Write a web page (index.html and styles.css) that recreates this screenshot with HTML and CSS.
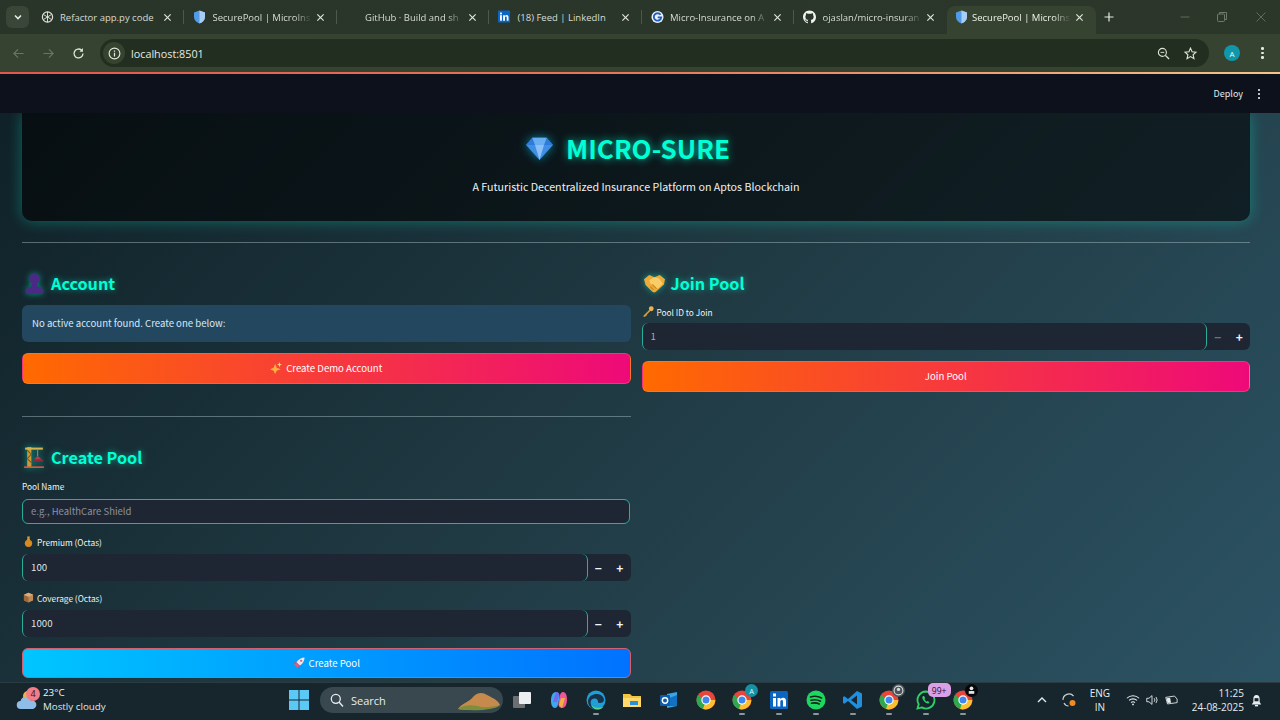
FILE: index.html
```html
<!DOCTYPE html>
<html lang="en">
<head>
    <meta charset="UTF-8">
    <meta name="viewport" content="width=device-width, initial-scale=1.0">
    <title>SecurePool | MicroInsure</title>
    <link rel="stylesheet" href="styles.css">
</head>
<body>
    <svg class="defs" width="0" height="0">
        <symbol id="i-shield" viewBox="0 0 12 14">
            <path d="M6 .5 11.500 2.400V7c0 3.200-2.400 5.400-5.500 6.600C2.900 12.400.5 10.200.5 7V2.400Z" fill="#4f9be8"/>
            <path d="M6 .5 11.500 2.400V7c0 3.200-2.400 5.400-5.500 6.600Z" fill="#a9cdf2"/>
        </symbol>
        <symbol id="i-close" viewBox="0 0 10 10">
            <path d="M1.500 1.500 8.500 8.500M8.500 1.500 1.500 8.500" stroke="#dfe5da" stroke-width="1.300" fill="none"/>
        </symbol>
        <symbol id="i-chrome" viewBox="0 0 20 20">
            <circle cx="10" cy="10" r="9.500" fill="#e8453c"/>
            <path d="M10 10 1.800 5.200A9.500 9.500 0 0 0 6.500 18.800L10 19.500Z" fill="#2fa84f"/>
            <path d="M10 10h9.300A9.500 9.500 0 0 1 7 19Z" fill="#fbc02d"/>
            <circle cx="10" cy="10" r="4.700" fill="#fff"/>
            <circle cx="10" cy="10" r="3.500" fill="#3f86ee"/>
        </symbol>
        <symbol id="i-github" viewBox="0 0 16 16">
            <path fill="#f2f4ef" d="M8 0C3.580 0 0 3.580 0 8c0 3.540 2.290 6.530 5.470 7.590.4.070.55-.17.55-.38 0-.19-.01-.82-.01-1.490-2.010.37-2.530-.49-2.690-.94-.09-.23-.48-.94-.82-1.130-.28-.15-.68-.52-.01-.53.63-.01 1.080.58 1.230.82.720 1.210 1.870.870 2.330.660.070-.520.280-.870.510-1.070-1.780-.2-3.640-.89-3.640-3.950 0-.870.310-1.590.820-2.150-.080-.2-.360-1.020.080-2.120 0 0 .670-.210 2.200.820a7.400 7.400 0 0 1 4 0c1.530-1.040 2.200-.820 2.200-.820.440 1.100.160 1.920.080 2.120.510.560.820 1.270.820 2.150 0 3.070-1.870 3.750-3.650 3.950.290.250.540.730.540 1.480 0 1.070-.010 1.930-.010 2.200 0 .210.150.460.550.380A8 8 0 0 0 16 8c0-4.420-3.580-8-8-8Z"/>
        </symbol>
    </svg>

    <div class="tabstrip">
        <div class="tab-menu">
            <svg width="10" height="10" viewBox="0 0 10 10"><path d="M2 3.500 5 6.500 8 3.500" stroke="#e6ebe2" stroke-width="1.600" fill="none"/></svg>
        </div>
        <div class="tab">
            <svg class="favicon" viewBox="0 0 14 14"><circle cx="7" cy="7" r="5.500" fill="none" stroke="#dfe5da" stroke-width="1.300"/><path d="M3 4.500 11 9.500M3 9.500 11 4.500M7 1.500V12.500" stroke="#dfe5da" stroke-width="1"/></svg>
            <span class="tab-title tab-title-full">Refactor app.py code</span>
            <svg class="tab-close"><use href="#i-close"/></svg>
        </div>
        <div class="tab">
            <svg class="favicon"><use href="#i-shield"/></svg>
            <span class="tab-title">SecurePool | MicroIns</span>
            <svg class="tab-close"><use href="#i-close"/></svg>
        </div>
        <div class="tab">
            <svg class="favicon" viewBox="0 0 14 14"></svg>
            <span class="tab-title">GitHub · Build and sh</span>
            <svg class="tab-close"><use href="#i-close"/></svg>
        </div>
        <div class="tab">
            <svg class="favicon" viewBox="0 0 14 14"><rect width="13" height="13" rx="1" fill="#0a66c2"/><rect x="2.200" y="5" width="2" height="6" fill="#fff"/><rect x="2.200" y="2.200" width="2" height="2" fill="#fff"/><path d="M5.500 5h1.900v1c.5-.8 1.200-1.200 2-1.200 1.400 0 1.900 1 1.900 2.400V11H9.400V7.800c0-.8-.2-1.300-.9-1.300s-1 .6-1 1.300V11h-2Z" fill="#fff"/></svg>
            <span class="tab-title tab-title-full">(18) Feed | LinkedIn</span>
            <svg class="tab-close"><use href="#i-close"/></svg>
        </div>
        <div class="tab">
            <svg class="favicon" viewBox="0 0 14 14"><circle cx="7" cy="7" r="6.500" fill="#eef2fb"/><path d="M10.300 4.600A4 4 0 1 0 11 7.400H7.200" fill="none" stroke="#1f5fbf" stroke-width="2"/></svg>
            <span class="tab-title">Micro-Insurance on A</span>
            <svg class="tab-close"><use href="#i-close"/></svg>
        </div>
        <div class="tab">
            <svg class="favicon"><use href="#i-github"/></svg>
            <span class="tab-title">ojaslan/micro-insuran</span>
            <svg class="tab-close"><use href="#i-close"/></svg>
        </div>
        <div class="tab tab-active">
            <svg class="favicon"><use href="#i-shield"/></svg>
            <span class="tab-title">SecurePool | MicroIns</span>
            <svg class="tab-close"><use href="#i-close"/></svg>
        </div>
        <svg class="tab-new" viewBox="0 0 10 10"><path d="M5 .5V9.500M.5 5H9.500" stroke="#e6ebe2" stroke-width="1.200"/></svg>
        <div class="win-controls">
            <svg viewBox="0 0 10 10"><path d="M.5 5H9.500" stroke="#5f6b5a" stroke-width="1"/></svg>
            <svg viewBox="0 0 10 10"><rect x=".5" y="2" width="7" height="7.500" rx="1" fill="none" stroke="#6f7b6a"/><path d="M2.500 2V.5H9.500V7.500H8" fill="none" stroke="#6f7b6a"/></svg>
            <svg class="win-close" viewBox="0 0 10 10"><path d="M.5 .5 9.500 9.500M9.500 .5 .5 9.500" stroke="#5f6b5a" stroke-width="1"/></svg>
        </div>
    </div>

    <div class="toolbar">
        <svg class="nav-icon" viewBox="0 0 14 14"><path d="M12.500 7H2M6.500 2.500 2 7l4.500 4.500" fill="none" stroke="#69755f" stroke-width="1.300"/></svg>
        <svg class="nav-icon" viewBox="0 0 14 14"><path d="M1.500 7H12M7.500 2.500 12 7l-4.500 4.500" fill="none" stroke="#69755f" stroke-width="1.300"/></svg>
        <svg class="nav-icon" viewBox="0 0 14 14"><path d="M11.800 7A4.800 4.800 0 1 1 10.300 3.500" fill="none" stroke="#dfe5da" stroke-width="1.400"/><path d="M11.800 1.200V5H8Z" fill="#dfe5da"/></svg>
        <div class="omnibox">
            <span class="site-info">
                <svg width="13" height="13" viewBox="0 0 14 14"><circle cx="7" cy="7" r="5.800" fill="none" stroke="#e6ebe2" stroke-width="1.200"/><path d="M7 6.200V10.200M7 3.800V5" stroke="#e6ebe2" stroke-width="1.300"/></svg>
            </span>
            <span class="url">localhost:8501</span>
            <svg class="omni-icon" viewBox="0 0 14 14"><circle cx="5.800" cy="5.800" r="4.300" fill="none" stroke="#dfe5da" stroke-width="1.200"/><path d="M9 9 13 13" stroke="#dfe5da" stroke-width="1.400"/><path d="M3.800 5.800H7.800" stroke="#dfe5da"/></svg>
            <svg class="omni-icon" viewBox="0 0 14 14"><path d="M7 1.200 8.700 5.100 13 5.500 9.800 8.300 10.700 12.500 7 10.300 3.300 12.500 4.200 8.300 1 5.500 5.300 5.100Z" fill="none" stroke="#dfe5da" stroke-width="1.200"/></svg>
        </div>
        <span class="avatar">A</span>
        <span class="chrome-dots"><i></i><i></i><i></i></span>
    </div>
    <div class="loadline"></div>

    <div class="app">
        <div class="app-header">
            <span class="deploy">Deploy</span>
            <span class="app-dots"><i></i><i></i><i></i></span>
        </div>

        <div class="app-main">
            <div class="hero">
                <h1 class="hero-title">
                    <svg class="hero-gem" viewBox="0 0 32 28">
                        <path d="M8 2H24L31 10 16 27 1 10Z" fill="#3f8fe8"/>
                        <path d="M11 10H21L16 27Z" fill="#8cc1f7"/>
                        <path d="M8 2 11 10H1ZM24 2 21 10H31Z" fill="#2f7bd6"/>
                        <path d="M8 2H24L21 10H11Z" fill="#6aaef2"/>
                    </svg>
                    MICRO-SURE
                </h1>
                <p class="hero-sub">A Futuristic Decentralized Insurance Platform on Aptos Blockchain</p>
            </div>

            <hr class="rule rule-top">

            <div class="columns">
                <div class="col">
                    <h2 class="section-title">
                        <svg class="section-icon" viewBox="0 0 20 22"><circle cx="10" cy="6.500" r="5" fill="#4b2a85"/><path d="M7.500 10.500h5l1 3.500c2.500.6 4.500 1.700 4.500 3.500V21H2v-3.500c0-1.800 2-2.900 4.500-3.500Z" fill="#4b2a85"/></svg>
                        Account
                    </h2>
                    <div class="info-box">No active account found. Create one below:</div>
                    <button class="btn btn-hot" type="button">
                        <svg class="btn-icon" viewBox="0 0 14 14"><path d="M6 2 7.800 6.700 12.500 8.500 7.800 10.300 6 14 4.200 10.300 0 8.500 4.200 6.700Z" fill="#fbb040"/><path d="M11 0 11.800 2.200 14 3 11.800 3.800 11 6 10.200 3.800 8 3 10.200 2.200Z" fill="#fdd27a"/></svg>
                        Create Demo Account
                    </button>

                    <hr class="rule rule-mid">

                    <h2 class="section-title">
                        <svg class="section-icon" viewBox="0 0 20 22"><rect x="3" y="1" width="4" height="19" fill="#c99a3c"/><path d="M3 4 7 8M7 8 3 12M3 12 7 16" stroke="#7a5a20" stroke-width="1"/><rect x="1" y="1.500" width="17" height="2" fill="#d8b34a"/><path d="M13 3.500V10" stroke="#8a8f92" stroke-width="1"/><path d="M9.500 13 13 9.500 17 13Z" fill="#c23a48"/><rect x="9" y="13" width="9" height="2" fill="#8c2b3e"/><rect x="0" y="19.500" width="19" height="1.500" fill="#e0583f"/></svg>
                        Create Pool
                    </h2>
                    <label class="field-label">Pool Name</label>
                    <div class="text-input">e.g., HealthCare Shield</div>
                    <label class="field-label field-label-next">
                        <svg class="label-icon" viewBox="0 0 12 12"><path d="M4.500 .5h3L7 3H5Z" fill="#e2a32e"/><rect x="4.500" y="3" width="3" height="1" fill="#f1e3b8"/><circle cx="6" cy="8" r="4" fill="#d98a1e"/></svg>
                        Premium (Octas)
                    </label>
                    <div class="number-input">
                        <span class="number-value">100</span>
                        <span class="step">&minus;</span>
                        <span class="step">+</span>
                    </div>
                    <label class="field-label field-label-next">
                        <svg class="label-icon" viewBox="0 0 12 12"><path d="M6 .8 11 3v6.200L6 11.500 1 9.200V3Z" fill="#c08a55"/><path d="M6 5.200V11.500L1 9.200V3Z" fill="#9c6a3a"/><path d="M1 3 6 5.200 11 3 6 .8Z" fill="#d9ad7c"/></svg>
                        Coverage (Octas)
                    </label>
                    <div class="number-input">
                        <span class="number-value">1000</span>
                        <span class="step">&minus;</span>
                        <span class="step">+</span>
                    </div>
                    <button class="btn btn-cool" type="button">
                        <svg class="btn-icon" viewBox="0 0 14 14"><path d="M13.500 .5C10 .5 6.500 2.500 4 6L8 10C11.500 7.500 13.500 4 13.500 .5Z" fill="#ece6ee"/><path d="M4 6 1 6.500 2.500 8.500ZM8 10 7.500 13 5.500 11.500Z" fill="#d6455d"/><path d="M4 6 8 10 5 12.500 1.500 9Z" fill="#e0607a"/><circle cx="9.500" cy="4.500" r="1.300" fill="#e0607a"/></svg>
                        Create Pool
                    </button>
                </div>

                <div class="col">
                    <h2 class="section-title">
                        <svg class="section-icon" viewBox="0 0 20 18"><path d="M0 5 5 1 10 3 15 1 20 5 19 10 11 17C10 17.800 8.500 17.500 7.500 16.500L1.500 10.500Z" fill="#eeaa38"/><path d="M5 6 10 3 14 4 18 9 13 14 8 9.500 6.500 10Z" fill="#f9cc66"/><path d="M6 12 9 15M8 10 12 14" stroke="#c4861f" stroke-width="1"/></svg>
                        Join Pool
                    </h2>
                    <label class="field-label">
                        <svg class="label-icon" viewBox="0 0 12 12"><circle cx="9" cy="3" r="2.600" fill="#ebb44c"/><path d="M7.500 3.500 .5 10.500V11.800H2.500L3 10.500 4.200 10.300 4.500 9 8.500 5Z" fill="#d9a03a"/></svg>
                        Pool ID to Join
                    </label>
                    <div class="number-input number-input-tight">
                        <span class="number-value number-dim">1</span>
                        <span class="step step-off">&minus;</span>
                        <span class="step">+</span>
                    </div>
                    <button class="btn btn-hot" type="button">Join Pool</button>
                </div>
            </div>
        </div>
    </div>

    <div class="taskbar">
        <div class="weather">
            <svg class="weather-icon" viewBox="0 0 22 24">
                <circle cx="12" cy="8" r="5" fill="#f2b23c"/>
                <path d="M5 21a4 4 0 0 1-.5-8 5.500 5.500 0 0 1 10.500-.5 4.300 4.300 0 0 1 2 8.500Z" fill="#8fbde8"/>
            </svg>
            <span class="weather-badge">4</span>
            <div class="weather-text">
                <span class="weather-temp">23°C</span>
                <span>Mostly cloudy</span>
            </div>
        </div>

        <div class="task-center">
            <svg class="win-logo" viewBox="0 0 20 20"><path d="M0 0H9.500V9.500H0ZM10.500 0H20V9.500H10.500ZM0 10.500H9.500V20H0ZM10.500 10.500H20V20H10.500Z" fill="#5cc8f5"/></svg>
            <div class="search-pill">
                <svg width="14" height="14" viewBox="0 0 14 14"><circle cx="5.800" cy="5.800" r="4.500" fill="none" stroke="#e6edf0" stroke-width="1.300"/><path d="M9 9 13 13.500" stroke="#e6edf0" stroke-width="1.400"/></svg>
                <span class="search-label">Search</span>
                <svg class="search-art" viewBox="0 0 44 20"><path d="M1 18C5 12 12 11 16 6 20 1 26 1 30 4 36 7 41 9 43 14 38 19 10 20 1 18Z" fill="#c58a4c"/><path d="M1 18C8 13 18 14 24 16 30 17 38 15 43 14 38 20 10 20 1 18Z" fill="#7c8f3a"/></svg>
            </div>
            <span class="app-slot">
                <svg viewBox="0 0 20 20"><rect x="1" y="6" width="12" height="12" rx="1" fill="#6b6f72"/><rect x="7" y="2" width="12" height="12" rx="1" fill="#eceff1"/></svg>
            </span>
            <span class="app-slot">
                <svg viewBox="0 0 20 20"><path d="M7 2C3.500 2 2 6 2 11c0 4 1.500 7 4 7 3 0 3-4 4-8s1-8-3-8Z" fill="#3fa7f0"/><path d="M13 18c3.500 0 5-4 5-9 0-4-1.500-7-4-7-3 0-3 4-4 8s-1 8 3 8Z" fill="#f0569a"/><path d="M7 2c2 0 3 1 3 3l-2 7H4Z" fill="#7e5cf0" opacity=".8"/><path d="M10 15l2-7h4l-3 10Z" fill="#f2b23c"/></svg>
            </span>
            <span class="app-slot app-open">
                <svg viewBox="0 0 20 20"><circle cx="10" cy="10" r="9.500" fill="#1f9fd8"/><path d="M2 12C2 6 7 4 11 4c4 0 7 3 7 6 0 2-2 3-4 3-1.500 0-2-.5-2-1.500 0-2-1.500-3.500-4-3-3 .5-4 3-3 6 1 3 4 5 8 4.500C8 20.500 3 18 2 12Z" fill="#17324a"/><path d="M5 15c1 3 4 5 8 4.500 2-.5 3.500-1.500 4.500-3-3 2-9 2-12.500-1.500Z" fill="#5fd48a"/></svg>
            </span>
            <span class="app-slot">
                <svg viewBox="0 0 20 20"><path d="M1 4H8L10 6H19V17H1Z" fill="#f5c542"/><rect x="1" y="8" width="18" height="9" fill="#ffd969"/><rect x="8" y="11" width="8" height="4" fill="#2f8fd6"/></svg>
            </span>
            <span class="app-slot">
                <svg viewBox="0 0 20 20"><path d="M8 4 18 2V16L8 18Z" fill="#38a6e8"/><path d="M8 9 18 5V16H8Z" fill="#1371c4"/><rect x="1" y="5" width="10" height="11" rx="1" fill="#0f5da8"/><circle cx="6" cy="10.500" r="2.700" fill="none" stroke="#fff" stroke-width="1.400"/></svg>
            </span>
            <span class="app-slot"><svg><use href="#i-chrome"/></svg></span>
            <span class="app-slot app-open">
                <svg><use href="#i-chrome"/></svg>
                <span class="slot-badge slot-badge-teal">A</span>
            </span>
            <span class="app-slot app-open">
                <svg viewBox="0 0 20 20"><rect x="1" y="1" width="18" height="18" rx="1.500" fill="#0a66c2"/><rect x="4" y="8" width="3" height="8.500" fill="#fff"/><rect x="4" y="3.500" width="3" height="3" fill="#fff"/><path d="M8.500 8h2.800v1.300c.7-1 1.800-1.500 2.900-1.500 2 0 2.800 1.400 2.800 3.400v5.300h-3v-4.800c0-1-.3-1.700-1.200-1.700-1 0-1.500.8-1.500 1.700v4.800H8.500Z" fill="#fff"/></svg>
            </span>
            <span class="app-slot app-open">
                <svg viewBox="0 0 20 20"><circle cx="10" cy="10" r="9.500" fill="#1ed760"/><path d="M4.500 7C8 6 12.500 6.300 15.500 8M5 10.200C8 9.400 11.800 9.700 14.500 11.200M5.500 13.200C8 12.600 11 12.800 13.300 14" fill="none" stroke="#10261a" stroke-width="1.600" stroke-linecap="round"/></svg>
            </span>
            <span class="app-slot app-open">
                <svg viewBox="0 0 20 20"><path d="M14 1 19 3.500V16.500L14 19 5 11 1.500 13.800 0 13V7L1.500 6.200 5 9Z" fill="#1f8fe0"/><path d="M14 5.500 8 10 14 14.500Z" fill="#17262d"/></svg>
            </span>
            <span class="app-slot app-open">
                <svg><use href="#i-chrome"/></svg>
                <span class="slot-badge slot-badge-grey">
                    <svg viewBox="0 0 10 10"><circle cx="5" cy="5" r="4" fill="none" stroke="#d5dadc"/><circle cx="5" cy="4" r="1.500" fill="#d5dadc"/></svg>
                </span>
            </span>
            <span class="app-slot app-open">
                <svg viewBox="0 0 20 20"><path d="M10 1.500a8.500 8.500 0 0 0-7.300 12.800L1.500 18.500l4.300-1.100A8.500 8.500 0 1 0 10 1.500Z" fill="#17262d" stroke="#2fd06a" stroke-width="1.800"/><path d="M7 6c-1 1-1 2.500.5 4.500s3.500 3.500 5 3l1-1.300-2-1.200-1 .7C9.500 10.500 9 10 8.500 9l.7-1L8 6Z" fill="#2fd06a"/></svg>
                <span class="slot-badge slot-badge-count">99+</span>
            </span>
            <span class="app-slot app-open">
                <svg><use href="#i-chrome"/></svg>
                <span class="slot-badge slot-badge-dark">
                    <svg viewBox="0 0 10 10"><circle cx="5" cy="3" r="1.700" fill="#e6e6e6"/><rect x="2.500" y="5.500" width="5" height="2.500" fill="#e6e6e6"/></svg>
                </span>
            </span>
        </div>

        <div class="tray">
            <svg class="tray-caret" viewBox="0 0 10 10"><path d="M1 7 5 3l4 4" fill="none" stroke="#e6edf0" stroke-width="1.300"/></svg>
            <svg class="tray-sync" viewBox="0 0 16 16"><path d="M2 8a6 6 0 0 1 10.500-4" fill="none" stroke="#c8d0d4" stroke-width="1.200"/><path d="M3 11c1 2 2.500 3 4.500 3" fill="none" stroke="#c8d0d4" stroke-width="1.200"/><circle cx="11.500" cy="11" r="3" fill="#f08a24"/></svg>
            <div class="tray-lang"><span>ENG</span><span>IN</span></div>
            <svg class="tray-icon" viewBox="0 0 16 16"><path d="M1 6a10 10 0 0 1 14 0M3.500 8.500a6.500 6.500 0 0 1 9 0M5.800 11a3 3 0 0 1 4.400 0" fill="none" stroke="#e6edf0" stroke-width="1.200"/><circle cx="8" cy="13" r="1" fill="#e6edf0"/></svg>
            <svg class="tray-icon" viewBox="0 0 16 16"><path d="M2 6H4.500L8 3V13L4.500 10H2Z" fill="none" stroke="#e6edf0"/><path d="M10.500 6a3 3 0 0 1 0 4M12.500 4.500a5.500 5.500 0 0 1 0 7" fill="none" stroke="#e6edf0"/></svg>
            <svg class="tray-icon" viewBox="0 0 16 16"><path d="M2 5 12 3.500 15 7V11L4 12.500Z" fill="none" stroke="#e6edf0"/><path d="M3 6 7 5.500 8 11 4 11.500Z" fill="#e6edf0"/></svg>
            <div class="tray-clock"><span>11:25</span><span>24-08-2025</span></div>
            <svg class="tray-bell" viewBox="0 0 14 16"><path d="M7 1C4 1 3 3.500 3 6V10L1 13H13L11 10V6C11 3.500 10 1 7 1Z" fill="#e6edf0"/><rect x="5" y="13.500" width="4" height="2" fill="#e6edf0"/><rect x="4.500" y="5" width="5" height="4" fill="#17262d"/></svg>
        </div>
    </div>
</body>
</html>
```

FILE: styles.css
```css
* {
    box-sizing: border-box;
}

html, body {
    margin: 0;
    padding: 0;
    height: 720px;
    overflow: hidden;
}

body {
    display: flex;
    flex-direction: column;
    font-family: "Noto Sans CJK SC", "Noto Sans", sans-serif;
    color: #fff;
    background-color: #17262d;
}

.defs {
    position: absolute;
}

/* browser chrome */
.tabstrip {
    display: flex;
    align-items: center;
    height: 34px;
    flex-shrink: 0;
    background: linear-gradient(90deg, #2a3529, #2b3729);
    font-family: "Open Sans", sans-serif;
}

.tab-menu {
    display: flex;
    align-items: center;
    justify-content: center;
    width: 23px;
    height: 22px;
    margin-left: 6px;
    margin-right: 2.5px;
    border-radius: 6px;
    background-color: #3a4638;
}

.tab {
    display: flex;
    align-items: center;
    width: 152.5px;
    height: 34px;
    padding: 0 12px 0 9px;
    position: relative;
}

.tab::after {
    content: "";
    position: absolute;
    right: 0;
    top: 10px;
    height: 14px;
    width: 1px;
    background-color: #4c5848;
}

.tab:nth-child(7)::after,
.tab-active::after {
    display: none;
}

.favicon {
    width: 13px;
    height: 14px;
    flex-shrink: 0;
}

.tab-title {
    flex: 1;
    min-width: 0;
    margin: 0 4px 0 6.5px;
    font-size: 9.5px;
    white-space: nowrap;
    color: #d6dcd2;
    -webkit-mask-image: linear-gradient(90deg, #000 82%, transparent);
    mask-image: linear-gradient(90deg, #000 82%, transparent);
}

.tab-title-full {
    -webkit-mask-image: none;
    mask-image: none;
}

.tab-close {
    width: 9px;
    height: 9px;
    flex-shrink: 0;
}

.tab-active {
    width: 149px;
    height: 28px;
    align-self: flex-end;
    padding: 0 12px 6px 8px;
    border-radius: 8px 8px 0 0;
    background-color: #364330;
}

.tab-active .tab-title {
    margin-left: 4.5px;
    color: #eef1ea;
}

.tab-new {
    width: 10px;
    height: 10px;
    margin-left: 8px;
}

.win-controls {
    display: flex;
    gap: 27px;
    margin-left: auto;
    margin-right: 14px;
}

.win-controls svg {
    width: 10px;
    height: 10px;
}

.win-controls .win-close {
    margin-left: 2px;
}

.toolbar {
    display: flex;
    align-items: center;
    height: 38px;
    flex-shrink: 0;
    padding-left: 12px;
    background-color: #364330;
    font-family: "Open Sans", sans-serif;
}

.nav-icon {
    width: 13px;
    height: 13px;
    margin-right: 17px;
}

.omnibox {
    display: flex;
    align-items: center;
    width: 1109px;
    height: 28px;
    margin-left: -2px;
    border-radius: 14px;
    background-color: #222e1f;
}

.site-info {
    display: flex;
    align-items: center;
    justify-content: center;
    width: 22px;
    height: 22px;
    margin-left: 3px;
    border-radius: 50%;
    background-color: #36432f;
}

.url {
    flex: 1;
    margin-left: 6px;
    font-size: 10.8px;
    color: #e6ebe2;
}

.omni-icon {
    width: 13px;
    height: 13px;
    margin-right: 14px;
}

.omni-icon + .omni-icon {
    margin-right: 12.5px;
}

.avatar {
    display: flex;
    align-items: center;
    justify-content: center;
    width: 16px;
    height: 16px;
    margin-left: 15px;
    border-radius: 50%;
    background-color: #0f97ab;
    font-size: 8px;
    color: #e8fbff;
}

.chrome-dots, .app-dots {
    display: flex;
    flex-direction: column;
    gap: 2px;
    margin-left: 21px;
}

.chrome-dots i, .app-dots i {
    display: block;
    width: 2.5px;
    height: 2.5px;
    border-radius: 50%;
    background-color: #e6ebe2;
}

.loadline {
    height: 2px;
    flex-shrink: 0;
    background: linear-gradient(90deg, #e2574e, #e8785a 50%, #f5c38a);
}

/* streamlit app */
.app {
    display: flex;
    flex-direction: column;
    flex: 1;
    min-height: 0;
    background: linear-gradient(135deg, #0f2027 0%, #203a43 50%, #2c5364 100%);
}

.app-header {
    display: flex;
    align-items: center;
    justify-content: flex-end;
    height: 39px;
    flex-shrink: 0;
    padding-right: 20px;
    background-color: #0c111b;
}

.deploy {
    font-size: 9px;
    color: #e6e9ee;
}

.app-dots {
    margin-left: 15px;
}

.app-dots i {
    width: 2px;
    height: 2px;
    background-color: #fafafa;
}

.app-main {
    flex: 1;
    min-height: 0;
    overflow: hidden;
    padding: 0 30px 0 22px;
}

.hero {
    height: 108px;
    padding-top: 17px;
    text-align: center;
    border-radius: 0 0 10px 10px;
    background-color: rgba(0, 0, 0, 0.55);
    box-shadow: 0 0 15px rgba(0, 255, 213, 0.32);
}

.hero-title {
    display: flex;
    align-items: center;
    justify-content: center;
    gap: 12px;
    margin: 0;
    padding-right: 17px;
    font-size: 26px;
    line-height: 36px;
    font-weight: 700;
    color: #00ffd5;
    text-shadow: 0 0 8px rgba(0, 255, 213, 0.75);
}

.hero-gem {
    width: 29px;
    height: 25px;
    filter: drop-shadow(0 0 5px rgba(0, 200, 255, 0.6));
}

.hero-sub {
    margin: 11px 0 0;
    font-size: 10.7px;
    line-height: 20px;
    color: #eef2f3;
}

.rule {
    height: 1px;
    margin: 0;
    border: 0;
    background-color: rgba(190, 215, 220, 0.4);
}

.rule-top {
    margin-top: 21px;
}

.rule-mid {
    margin-top: 32px;
}

.columns {
    display: grid;
    grid-template-columns: 1fr 1fr;
    gap: 11px;
}

.col {
    min-width: 0;
}

.section-title {
    display: flex;
    align-items: center;
    gap: 6px;
    height: 30px;
    margin: 25px 0 0;
    padding-left: 2px;
    font-size: 16.2px;
    font-weight: 700;
    color: #00ffd5;
    text-shadow: 0 0 6px rgba(0, 255, 213, 0.55);
}

.section-icon {
    width: 21px;
    height: 23px;
    filter: drop-shadow(0 0 3px rgba(0, 255, 213, 0.5));
}

.info-box {
    display: flex;
    align-items: center;
    height: 37px;
    margin-top: 7px;
    padding: 0 0 1px 10px;
    border-radius: 6px;
    background-color: #244760;
    font-size: 9.6px;
    color: #d7e9f7;
}

.btn {
    display: flex;
    align-items: center;
    justify-content: center;
    gap: 4px;
    width: 100%;
    height: 31px;
    margin-top: 11px;
    padding: 0 0 1px;
    border-radius: 6px;
    font-family: inherit;
    font-size: 9.6px;
    color: #fff;
}

.btn-hot {
    border: 1px solid rgba(255, 150, 110, 0.3);
    background: linear-gradient(90deg, #ff6a00, #ee0979);
}

.btn-cool {
    height: 30px;
    border: 1px solid #d2606e;
    background: linear-gradient(90deg, #00c6ff, #0072ff);
}

.btn-icon {
    width: 12px;
    height: 12px;
}

.field-label {
    display: flex;
    align-items: center;
    gap: 3px;
    height: 14px;
    margin-top: 7px;
    padding-bottom: 1px;
    font-size: 8.3px;
    color: #f0f3f4;
}

.field-label-next {
    margin-top: 11px;
}

.field-label-next + .number-input + .field-label-next {
    margin-top: 10px;
}

.label-icon {
    width: 11px;
    height: 11px;
    margin-left: 1px;
}

.text-input {
    display: flex;
    align-items: center;
    width: 608px;
    height: 25px;
    margin-top: 6px;
    padding: 0 0 2px 8px;
    border: 1px solid #2aae9b;
    border-radius: 6px;
    background-color: #1e2633;
    font-size: 9.5px;
    color: #8a929c;
}

.number-input {
    display: flex;
    align-items: center;
    height: 27px;
    margin-top: 5px;
    border-radius: 6px;
    background-color: #1e2633;
}

.number-input-tight {
    margin-top: 4px;
}

.number-value {
    display: flex;
    align-items: center;
    flex: 1;
    height: 100%;
    padding: 0 0 1px 8px;
    border-left: 1px solid #2aae9b;
    border-right: 1px solid #2aae9b;
    border-radius: 6px;
    font-size: 9.7px;
    color: #dfe4ea;
}

.number-dim {
    color: #a7adb5;
}

.step {
    width: 21.5px;
    text-align: center;
    font-size: 12px;
    font-weight: 700;
    line-height: 1;
    color: #f3f5f7;
}

.step-off {
    color: #6d7480;
}

/* windows taskbar */
.taskbar {
    display: flex;
    align-items: center;
    height: 38px;
    flex-shrink: 0;
    padding-bottom: 3px;
    border-top: 1px solid #2a3b42;
    background-color: #17262d;
    font-family: "Open Sans", sans-serif;
}

.weather {
    display: flex;
    align-items: center;
    width: 287px;
    flex-shrink: 0;
    padding-left: 16px;
    position: relative;
}

.weather-icon {
    width: 22px;
    height: 24px;
}

.weather-badge {
    position: absolute;
    left: 26px;
    top: 1px;
    width: 14px;
    height: 14px;
    border-radius: 50%;
    background-color: #f47c86;
    text-align: center;
    font-size: 9px;
    line-height: 14px;
    color: #3a1216;
}

.weather-text {
    display: flex;
    flex-direction: column;
    margin-left: 5px;
    font-size: 9.8px;
    line-height: 14px;
    color: #dfe6e9;
}

.weather-temp {
    color: #f5f7f8;
}

.task-center {
    display: flex;
    align-items: center;
}

.win-logo {
    width: 20px;
    height: 20px;
    margin-left: 2px;
}

.search-pill {
    display: flex;
    align-items: center;
    width: 183px;
    height: 26px;
    margin-left: 11px;
    padding-left: 10px;
    border-radius: 13px;
    background-color: #39474e;
    position: relative;
}

.search-label {
    margin-left: 7px;
    font-size: 11px;
    color: #e6edf0;
}

.search-art {
    position: absolute;
    right: 2px;
    top: 4px;
    width: 44px;
    height: 20px;
}

.app-slot {
    display: flex;
    align-items: center;
    justify-content: center;
    width: 36.7px;
    height: 34px;
    position: relative;
}

.search-pill + .app-slot {
    margin-left: 1px;
}

.app-slot > svg {
    width: 20px;
    height: 20px;
}

.app-open::after {
    content: "";
    position: absolute;
    bottom: 2px;
    left: 50%;
    width: 6px;
    height: 2px;
    margin-left: -3px;
    border-radius: 1px;
    background-color: #8a979d;
}

.slot-badge {
    position: absolute;
    display: flex;
    align-items: center;
    justify-content: center;
    top: 1px;
    left: 21px;
    width: 13px;
    height: 13px;
    border-radius: 50%;
    font-size: 7.5px;
}

.slot-badge svg {
    width: 11px;
    height: 11px;
}

.slot-badge-teal {
    background-color: #1590a5;
    color: #dff8ff;
}

.slot-badge-grey {
    background-color: #4a5458;
}

.slot-badge-dark {
    background-color: #05080a;
}

.slot-badge-count {
    left: 20px;
    top: 0;
    width: 23px;
    height: 14px;
    border-radius: 5px;
    background-color: #d9a0e6;
    font-size: 8.5px;
    color: #2a1030;
}

.tray {
    display: flex;
    align-items: center;
    flex: 1;
    font-size: 10px;
    color: #e6edf0;
}

.tray-caret {
    width: 10px;
    height: 10px;
    margin-left: 56px;
}

.tray-sync {
    width: 16px;
    height: 16px;
    margin-left: 14px;
}

.tray-lang {
    display: flex;
    flex-direction: column;
    align-items: center;
    width: 24px;
    margin-left: 11px;
    line-height: 14px;
}

.tray-icon {
    width: 14px;
    height: 14px;
    margin-left: 5px;
}

.tray-lang + .tray-icon {
    margin-left: 14px;
}

.tray-clock {
    display: flex;
    flex-direction: column;
    align-items: flex-end;
    width: 58px;
    margin-left: 8px;
    line-height: 14px;
}

.tray-bell {
    width: 11px;
    height: 13px;
    margin-left: 7px;
}
```
